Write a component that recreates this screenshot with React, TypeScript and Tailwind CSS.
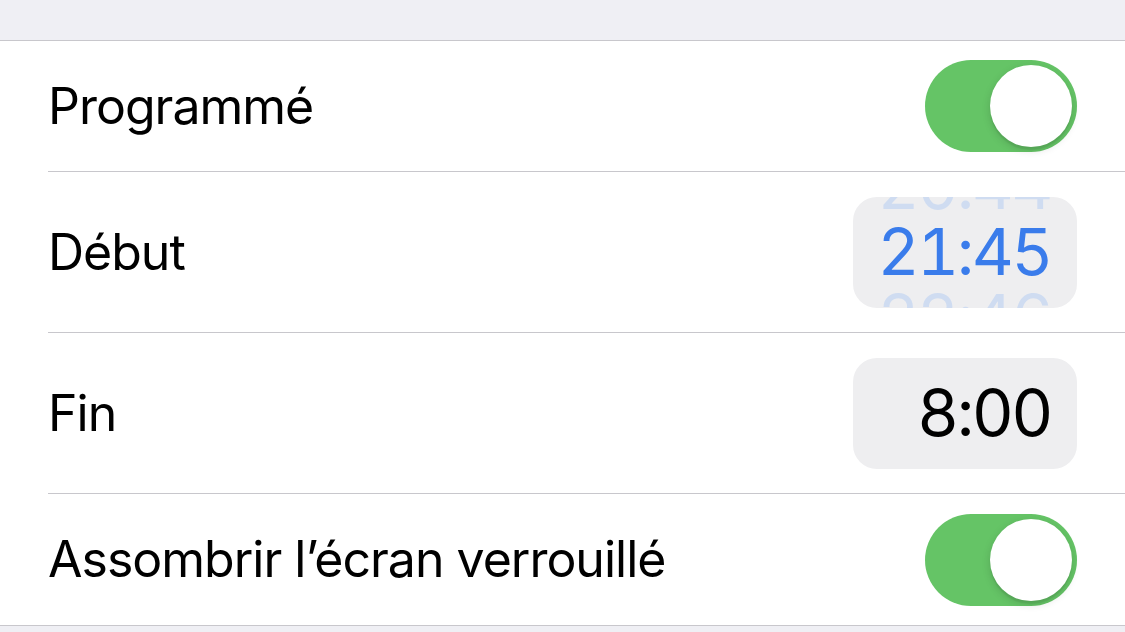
import React from 'react'

const font = { fontFamily: 'Inter, "Noto Sans", "Liberation Sans", sans-serif' }

function Toggle() {
    return (
        <div className="w-[152px] h-[92px] rounded-full bg-[#65c466] p-[5px] flex justify-end items-center">
            <div className="w-[82px] h-[82px] rounded-full bg-white shadow-[0_3px_8px_rgba(0,0,0,0.15),0_3px_1px_rgba(0,0,0,0.06)]" />
        </div>
    )
}

// roue de l'heure : valeurs voisines en fond, coupées par le cadre
function TimeBox({ value, prev, next, active }: { value: string; prev?: string; next?: string; active?: boolean }) {
    const line = 'text-[65px] leading-[66px] tracking-[-2.5px] tabular-nums shrink-0'
    return (
        <div className="w-[224px] h-[111px] rounded-[24px] bg-[#eeeef0] overflow-hidden flex flex-col items-end justify-center pr-[26px]">
            {prev && <div className={`${line} text-[#cfdcf1]`}>{prev}</div>}
            <div className={`${line} ${active ? 'text-[#3a7ceb]' : 'text-black'}`}>{value}</div>
            {next && <div className={`${line} text-[#cfdcf1]`}>{next}</div>}
        </div>
    )
}

function Row({ label, h, last, children }: { label: string; h: string; last?: boolean; children: React.ReactNode }) {
    return (
        <div className={`ml-[48px] pr-[48px] flex items-center justify-between ${h} ${last ? '' : 'border-b border-[#c8c7cc]'}`}>
            <span className="text-[50px] text-black tracking-[-1px]">{label}</span>
            {children}
        </div>
    )
}

export default function App() {
    return (
        <div className="w-[1125px] h-[632px] bg-[#efeff4] overflow-hidden" style={font}>
            <div className="h-[40px]" />
            <div className="bg-white border-y border-[#c8c7cc]">
                <Row label="Programmé" h="h-[131px]"><Toggle /></Row>
                <Row label="Début" h="h-[161px]">
                    <TimeBox value="21:45" prev="20:44" next="22:46" active />
                </Row>
                <Row label="Fin" h="h-[161px]">
                    <TimeBox value="8:00" />
                </Row>
                <Row label="Assombrir l’écran verrouillé" h="h-[131px]" last><Toggle /></Row>
            </div>
        </div>
    )
}
